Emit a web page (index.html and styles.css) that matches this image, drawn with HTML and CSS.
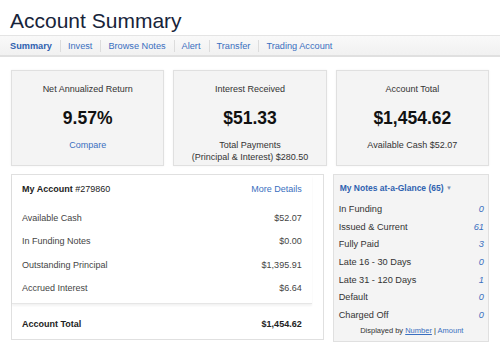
FILE: index.html
```html
<!DOCTYPE html>
<html lang="en">
<head>
    <meta charset="UTF-8">
    <title>Account Summary</title>
    <link rel="stylesheet" href="styles.css">
</head>
<body>
    <h1 class="page-title">Account Summary</h1>

    <div class="nav">
        <a class="nav-item active" href="#">Summary</a>
        <a class="nav-item" href="#">Invest</a>
        <a class="nav-item" href="#">Browse Notes</a>
        <a class="nav-item" href="#">Alert</a>
        <a class="nav-item" href="#">Transfer</a>
        <a class="nav-item" href="#">Trading Account</a>
    </div>

    <div class="content">
        <div class="stat-row">
            <div class="stat-card">
                <div class="stat-title">Net Annualized Return</div>
                <div class="stat-value">9.57%</div>
                <a class="stat-link" href="#">Compare</a>
            </div>
            <div class="stat-card">
                <div class="stat-title">Interest Received</div>
                <div class="stat-value">$51.33</div>
                <div class="stat-note">Total Payments<br>(Principal &amp; Interest) $280.50</div>
            </div>
            <div class="stat-card">
                <div class="stat-title">Account Total</div>
                <div class="stat-value">$1,454.62</div>
                <div class="stat-note">Available Cash $52.07</div>
            </div>
        </div>

        <div class="detail-row">
            <div class="account-card">
                <div class="account-body">
                    <div class="account-head">
                        <span><b>My Account</b> #279860</span>
                        <a href="#">More Details</a>
                    </div>
                    <div class="account-line"><span>Available Cash</span><span>$52.07</span></div>
                    <div class="account-line"><span>In Funding Notes</span><span>$0.00</span></div>
                    <div class="account-line"><span>Outstanding Principal</span><span>$1,395.91</span></div>
                    <div class="account-line"><span>Accrued Interest</span><span>$6.64</span></div>
                </div>
                <div class="account-total">
                    <span>Account Total</span><span>$1,454.62</span>
                </div>
            </div>

            <div class="notes-card">
                <div class="notes-head">My Notes at-a-Glance (65) <span class="caret">&#9660;</span></div>
                <div class="notes-line"><span>In Funding</span><a href="#">0</a></div>
                <div class="notes-line"><span>Issued &amp; Current</span><a href="#">61</a></div>
                <div class="notes-line"><span>Fully Paid</span><a href="#">3</a></div>
                <div class="notes-line"><span>Late 16 - 30 Days</span><a href="#">0</a></div>
                <div class="notes-line"><span>Late 31 - 120 Days</span><a href="#">1</a></div>
                <div class="notes-line"><span>Default</span><a href="#">0</a></div>
                <div class="notes-line"><span>Charged Off</span><a href="#">0</a></div>
                <div class="notes-foot">Displayed by <a href="#">Number</a> | <a class="plain" href="#">Amount</a></div>
            </div>
        </div>
    </div>
</body>
</html>
```

FILE: styles.css
```css
* {
    margin: 0;
    padding: 0;
    box-sizing: border-box;
}

body {
    font-family: "Liberation Sans", Arial, sans-serif;
    background: #fff;
    color: #333;
    font-size: 9px;
}

a {
    color: #3a6fc0;
    text-decoration: none;
}

.page-title {
    font-size: 21px;
    font-weight: normal;
    line-height: 24px;
    color: #17243a;
    padding: 9px 0 0 10px;
    height: 35px;
}

/* tab strip */
.nav {
    display: flex;
    align-items: center;
    height: 22px;
    padding-left: 3px;
    background: linear-gradient(#f9f9f9, #f1f1f1);
    border-top: 1px solid #e4e4e4;
    border-bottom: 2px solid #e0e0e0;
}

.nav-item {
    font-size: 9.2px;
    line-height: 12px;
    padding: 0 8px 0 7px;
    border-left: 1px solid #dcdcdc;
}

.nav-item:first-child {
    border-left: none;
}

.nav-item.active {
    font-weight: bold;
    color: #2f62b0;
}

.content {
    padding: 13px 11px 0 11px;
}

/* top summary boxes */
.stat-row {
    display: grid;
    grid-template-columns: 1fr 1fr 1fr;
    gap: 9px;
}

.stat-card {
    height: 96px;
    background: #f4f4f4;
    border: 1px solid #e0e0e0;
    box-shadow: 0 0 2px rgba(0,0,0,0.06);
    text-align: center;
    padding-top: 13px;
}

.stat-title {
    font-size: 9px;
    line-height: 11px;
    color: #333;
}

.stat-value {
    font-size: 17.5px;
    font-weight: bold;
    line-height: 22px;
    color: #111;
    margin-top: 12px;
}

.stat-link,
.stat-note {
    display: block;
    font-size: 9px;
    line-height: 12px;
    margin-top: 10px;
}

.stat-note {
    color: #333;
}

/* lower row */
.detail-row {
    display: grid;
    grid-template-columns: 2fr 1fr;
    gap: 9px;
    margin-top: 8px;
}

.account-card {
    height: 166px;
    border: 1px solid #e0e0e0;
    background: #fff;
}

.account-body {
    margin-right: 11px;
    padding: 7px 10px 3px 10px;
    border-bottom: 1px solid #e6e6e6;
    box-shadow: 0 2px 2px rgba(0,0,0,0.05);
}

.account-head {
    display: flex;
    justify-content: space-between;
    line-height: 14px;
    margin-bottom: 10px;
    color: #222;
}

.account-line {
    display: flex;
    justify-content: space-between;
    height: 23.5px;
    align-items: center;
    color: #444;
}

.account-total {
    display: flex;
    justify-content: space-between;
    margin-right: 11px;
    padding: 13px 10px 0 10px;
    line-height: 14px;
    font-weight: bold;
    color: #222;
}

.notes-card {
    height: 168px;
    background: #f4f4f4;
    border: 1px solid #e0e0e0;
    padding: 6px 3px 0 5px;
}

.notes-head {
    font-size: 8.5px;
    font-weight: bold;
    color: #2f62b0;
    line-height: 14px;
    padding-left: 1px;
    margin-bottom: 5px;
}

.caret {
    font-size: 6px;
    color: #7f93b3;
    vertical-align: 1px;
}

.notes-line {
    display: flex;
    justify-content: space-between;
    align-items: center;
    height: 17.7px;
    color: #333;
    font-size: 9.2px;
}

.notes-line a {
    font-style: italic;
    padding-right: 1px;
}

.notes-foot {
    font-size: 7.5px;
    line-height: 14px;
    text-align: center;
    color: #333;
    margin-top: 0;
}

.notes-foot a {
    text-decoration: underline;
}

.notes-foot a.plain {
    text-decoration: none;
}
```
